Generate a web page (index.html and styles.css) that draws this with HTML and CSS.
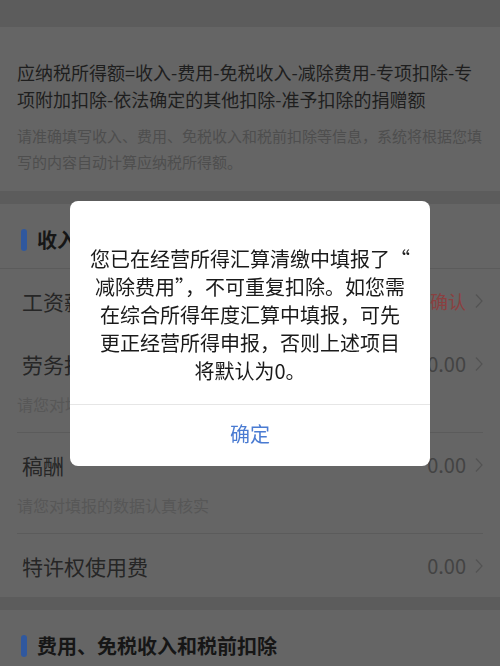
FILE: index.html
```html
<!DOCTYPE html>
<html lang="zh-CN">
<head>
<meta charset="utf-8">
<title>应纳税所得额</title>
<link rel="stylesheet" href="styles.css">
</head>
<body>
<div class="page">
  <section class="card intro">
    <p class="formula">应纳税所得额=收入-费用-免税收入-减除费用-专项扣除-专<br>项附加扣除-依法确定的其他扣除-准予扣除的捐赠额</p>
    <p class="hint">请准确填写收入、费用、免税收入和税前扣除等信息，系统将根据您填<br>写的内容自动计算应纳税所得额。</p>
  </section>

  <section class="card">
    <h2 class="sec-title"><span class="bar"></span>收入</h2>
    <div class="row plain">
      <div class="row-main">
        <span class="row-name">工资薪金</span>
        <span class="row-val red">待确认<svg class="chev" viewBox="0 0 8 16"><path d="M1 1.5 L7 8 L1 14.5"/></svg></span>
      </div>
    </div>
    <div class="row">
      <div class="row-main">
        <span class="row-name">劳务报酬</span>
        <span class="row-val">0.00<svg class="chev" viewBox="0 0 8 16"><path d="M1 1.5 L7 8 L1 14.5"/></svg></span>
      </div>
      <p class="row-sub">请您对填报的数据认真核实</p>
    </div>
    <div class="row">
      <div class="row-main">
        <span class="row-name">稿酬</span>
        <span class="row-val">0.00<svg class="chev" viewBox="0 0 8 16"><path d="M1 1.5 L7 8 L1 14.5"/></svg></span>
      </div>
      <p class="row-sub">请您对填报的数据认真核实</p>
    </div>
    <div class="row plain">
      <div class="row-main">
        <span class="row-name">特许权使用费</span>
        <span class="row-val">0.00<svg class="chev" viewBox="0 0 8 16"><path d="M1 1.5 L7 8 L1 14.5"/></svg></span>
      </div>
    </div>
  </section>

  <section class="card">
    <h2 class="sec-title"><span class="bar"></span>费用、免税收入和税前扣除</h2>
  </section>
</div>

<div class="overlay">
  <div class="dialog">
    <p class="dialog-text">您已在经营所得汇算清缴中填报了“<br>减除费用”，不可重复扣除。如您需<br>在综合所得年度汇算中填报，可先<br>更正经营所得申报，否则上述项目<br>将默认为0。</p>
    <div class="dialog-btn">确定</div>
  </div>
</div>
</body>
</html>
```

FILE: styles.css
```css
* { box-sizing: border-box; }

html, body {
  margin: 0;
  padding: 0;
}

body {
  width: 500px;
  height: 666px;
  overflow: hidden;
  background: #5c5c5c;
  font-family: "Noto Sans CJK SC", "Noto Sans", sans-serif;
}

.page {
  padding-top: 27px;
  display: flex;
  flex-direction: column;
  gap: 13px;
}

.card {
  background: #656565;
}

.intro {
  padding: 32px 10px 16px 17px;
}

.formula {
  margin: 0;
  font-size: 18px;
  line-height: 27px;
  color: #1e1e1e;
  white-space: nowrap;
}

.hint {
  margin: 10px 0 0;
  font-size: 15px;
  line-height: 26px;
  color: #4e4e4e;
  white-space: nowrap;
}

.sec-title {
  margin: 0;
  height: 65px;
  padding: 25px 20px 18px 21px;
  display: flex;
  align-items: center;
  gap: 10px;
  font-size: 20px;
  font-weight: bold;
  line-height: 22px;
  color: #161616;
  border-bottom: 1px solid #5b5b5b;
}

.bar {
  width: 6px;
  height: 22px;
  border-radius: 3px;
  background: #30589e;
}

.row {
  margin: 0 17px;
  border-bottom: 1px solid #5b5b5b;
}

.row.plain {
  border-bottom: none;
}

.row-main {
  height: 63px;
  padding-left: 5px;
  display: flex;
  align-items: center;
  justify-content: space-between;
}

.row-name {
  font-size: 21px;
  color: #262626;
}

.row-val {
  display: flex;
  align-items: center;
  gap: 9px;
  font-size: 20px;
  color: #434343;
}

.row-val.red {
  font-size: 18px;
  color: #8a4040;
}

.chev {
  width: 8px;
  height: 16px;
  fill: none;
  stroke: #535353;
  stroke-width: 1.2;
}

.row-sub {
  margin: -1px 0 0;
  padding-bottom: 18px;
  font-size: 16px;
  line-height: 20px;
  color: #575757;
}

.overlay {
  position: fixed;
  inset: 0;
  display: flex;
  align-items: center;
  justify-content: center;
}

.dialog {
  width: 360px;
  background: #ffffff;
  border-radius: 8px;
  overflow: hidden;
}

.dialog-text {
  margin: 0;
  padding: 44px 10px 19px;
  text-align: center;
  font-size: 20px;
  line-height: 28px;
  color: #1a1a1a;
  border-bottom: 1px solid #e6e6e6;
}

.dialog-btn {
  height: 61px;
  padding-bottom: 3px;
  display: flex;
  align-items: center;
  justify-content: center;
  font-size: 20px;
  color: #4a7bd2;
}
```
